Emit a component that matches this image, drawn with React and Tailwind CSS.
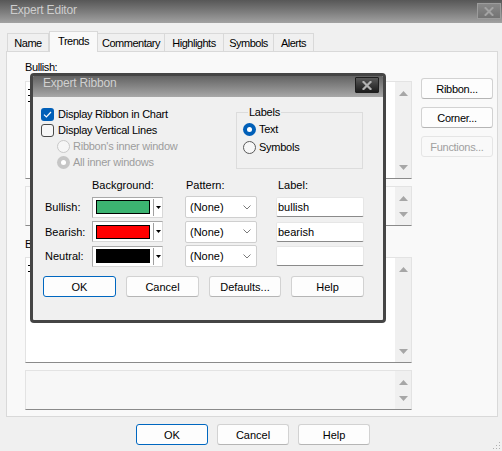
import React from "react";

const Up = () => (
  <svg width="9" height="5" viewBox="0 0 9 5"><path d="M4.5 0 L9 5 L0 5 Z" fill="#a6a6a6" /></svg>
);
const Down = () => (
  <svg width="9" height="5" viewBox="0 0 9 5"><path d="M0 0 L9 0 L4.5 5 Z" fill="#a6a6a6" /></svg>
);

function ListBox({ cls, marks = 0 }) {
  return (
    <div className={`flex border border-[#e3e3e3] border-b-[#8a8a8a] ${cls}`}>
      <div className="flex-1 flex flex-col gap-[5px] pt-[7px] pl-[2px]">
        {Array.from({ length: marks }).map((_, i) => (
          <div key={i} className="w-[3px] h-px bg-black" />
        ))}
      </div>
      <div className="w-[16px] bg-[#f0f0f0] flex flex-col items-center justify-between pt-[9px] pb-[8px]">
        <Up />
        <Down />
      </div>
    </div>
  );
}

function WinButton({ children, w = "w-[72px]", def = false, disabled = false }) {
  const border = def
    ? "border-[#0067c0]"
    : disabled
    ? "border-[#e5e5e5]"
    : "border-[#d2d2d2] border-b-[#b5b5b5]";
  const text = disabled ? "text-[#a0a0a0]" : "text-black";
  return (
    <div
      className={`${w} h-[21px] rounded-[3px] border ${border} ${disabled ? "bg-[#f9f9f9]" : "bg-[#fdfdfd]"} ${text} flex items-center justify-center`}
    >
      {children}
    </div>
  );
}

function CloseX({ color, sw }) {
  return (
    <svg width="10" height="9" viewBox="0 0 10 9">
      <path d="M1.5 1 L8.5 8 M8.5 1 L1.5 8" stroke={color} strokeWidth={sw} strokeLinecap="square" />
    </svg>
  );
}

function ColorCombo({ color }) {
  return (
    <div className="w-[71px] h-[21px] border border-[#a8a8a8] border-r-[#d8d8d8] border-b-[#d8d8d8] bg-white flex items-center">
      <div className={`ml-[3px] w-[54px] h-[14px] border border-black ${color}`} />
      <div className="ml-[3px] w-px h-[17px] bg-[#a0a0a0]" />
      <svg className="ml-[2px]" width="5" height="3" viewBox="0 0 5 3"><path d="M0 0 L5 0 L2.5 3 Z" fill="#000" /></svg>
    </div>
  );
}

function PatternCombo() {
  return (
    <div className="w-[72px] h-[22px] border border-[#cfcfcf] rounded-[2px] bg-white flex items-center justify-between pl-[4px] pr-[5px]">
      <span>(None)</span>
      <svg width="8" height="5" viewBox="0 0 8 5"><path d="M0.5 0.5 L4 4 L7.5 0.5" fill="none" stroke="#7a7a7a" strokeWidth="1" /></svg>
    </div>
  );
}

function LabelInput({ value }) {
  return (
    <div className="w-[88px] h-[20px] border border-[#e6e6e6] border-b-[#8a8a8a] rounded-[2px] bg-white flex items-center pl-[1px]">
      {value}
    </div>
  );
}

export default function App() {
  const tabs = [
    { t: "Name", w: "w-[42px]" },
    { t: "Trends", w: "w-[49px]", sel: true },
    { t: "Commentary", w: "w-[67px]" },
    { t: "Highlights", w: "w-[59px]" },
    { t: "Symbols", w: "w-[50px]" },
    { t: "Alerts", w: "w-[40px]" },
  ];
  return (
    <div className="w-[502px] h-[451px] bg-[#f0f0f0] relative overflow-hidden flex flex-col font-['Liberation_Sans',Arial,sans-serif] text-[11px] leading-[14px] text-black">
      {/* Title bar */}
      <div className="h-[23px] shrink-0 bg-linear-to-b from-[#575757] to-[#a2a2a2] flex justify-between items-start">
        <div className="pl-[10px] pt-[3px] text-[12px] leading-[14px] text-[#cdcdcd] tracking-[-0.2px]">Expert Editor</div>
        <div className="mt-[3px] mr-px w-[24px] h-[16px] border border-[#9c9c9c] bg-linear-to-b from-[#888888] to-[#737373] flex items-center justify-center">
          <CloseX color="#a3a3a3" sw="2" />
        </div>
      </div>

      {/* Tabs */}
      <div className="flex items-end h-[20px] mt-[8px] pl-[7px] tracking-[-0.5px]">
        {tabs.map((tab) =>
          tab.sel ? (
            <div
              key={tab.t}
              className={`${tab.w} h-[21px] -mb-px relative z-10 bg-[#f9f9f9] border border-b-0 border-[#d9d9d9] flex justify-center pt-[2px]`}
            >
              {tab.t}
            </div>
          ) : (
            <div
              key={tab.t}
              className={`${tab.w} h-[18px] bg-[#f0f0f0] border-t border-r border-[#d9d9d9] first:border-l flex justify-center pt-[2px]`}
            >
              {tab.t}
            </div>
          )
        )}
      </div>

      {/* Tab panel */}
      <div className="ml-[6px] w-[492px] h-[366px] border border-[#d9d9d9] bg-[#f9f9f9] flex pl-[18px] pr-[4px]">
        <div className="w-[387px] flex flex-col">
          <div className="mt-[8px] tracking-[-0.4px]">Bullish:</div>
          <ListBox cls="mt-[7px] h-[98px] bg-white" marks={3} />
          <ListBox cls="mt-[7px] h-[40px] bg-[#fbfbfb]" />
          <div className="mt-[11px] tracking-[-0.4px]">Bearish:</div>
          <ListBox cls="mt-[6px] h-[106px] bg-white" marks={2} />
          <ListBox cls="mt-[7px] h-[40px] bg-[#f7f7f7]" />
        </div>
        <div className="ml-[9px] w-[72px] flex flex-col gap-[8px] pt-[26px] tracking-[-0.3px]">
          <WinButton w="w-[72px]">Ribbon...</WinButton>
          <WinButton w="w-[72px]">Corner...</WinButton>
          <WinButton w="w-[72px]" disabled>Functions...</WinButton>
        </div>
      </div>

      {/* Bottom buttons */}
      <div className="mt-[7px] flex justify-center gap-[9px] pl-[4px]">
        <WinButton def>OK</WinButton>
        <WinButton>Cancel</WinButton>
        <WinButton>Help</WinButton>
      </div>

      {/* size grip */}
      <svg className="absolute right-[1px] bottom-[1px]" width="8" height="8" viewBox="0 0 8 8">
        <rect x="6" y="0" width="1" height="1" fill="#b0b0b0" />
        <rect x="3" y="3" width="1" height="1" fill="#b0b0b0" />
        <rect x="6" y="3" width="1" height="1" fill="#b0b0b0" />
        <rect x="0" y="6" width="1" height="1" fill="#b0b0b0" />
        <rect x="3" y="6" width="1" height="1" fill="#b0b0b0" />
        <rect x="6" y="6" width="1" height="1" fill="#b0b0b0" />
      </svg>

      {/* Modal dialog */}
      <div className="absolute left-[30px] top-[73px] w-[356px] h-[250px] border-[3px] border-[#454545] rounded-[4px] bg-[#f0f0f0] flex flex-col overflow-hidden z-20">
        <div className="h-[21px] shrink-0 bg-linear-to-b from-[#636363] to-[#a8a8a8] flex justify-between items-start">
          <div className="pl-[10px] text-[12px] leading-[14px] text-[#d0d0d0] tracking-[-0.2px]">Expert Ribbon</div>
          <div className="mt-px mr-[4px] w-[24px] h-[16px] border border-[#1e1e1e] rounded-[1px] bg-linear-to-b from-[#5a5a5a] to-[#1c1c1c] flex items-center justify-center">
            <CloseX color="#b4b4b4" sw="2.2" />
          </div>
        </div>

        {/* top section */}
        <div className="flex">
          <div className="w-[203px] pl-[8px] pt-[9px] flex flex-col tracking-[-0.25px]">
            <div className="h-[16px] flex items-center gap-[4px]">
              <div className="w-[13px] h-[13px] rounded-[3px] bg-[#005fb8] flex items-center justify-center">
                <svg width="9" height="7" viewBox="0 0 9 7"><path d="M1 3.6 L3.4 6 L8 1" fill="none" stroke="#fff" strokeWidth="1.2" /></svg>
              </div>
              <span>Display Ribbon in Chart</span>
            </div>
            <div className="h-[16px] flex items-center gap-[4px]">
              <div className="w-[13px] h-[13px] rounded-[3px] border border-[#4a4a4a] bg-[#f7f7f7]" />
              <span>Display Vertical Lines</span>
            </div>
            <div className="h-[16px] flex items-center gap-[3px] pl-[16px] text-[#9d9d9d]">
              <div className="w-[13px] h-[13px] rounded-full border border-[#c8c8c8] bg-[#f6f6f6]" />
              <span>Ribbon's inner window</span>
            </div>
            <div className="h-[16px] flex items-center gap-[3px] pl-[16px] text-[#9d9d9d]">
              <div className="w-[13px] h-[13px] rounded-full bg-[#c6c6c6] flex items-center justify-center">
                <div className="w-[5px] h-[5px] rounded-full bg-white" />
              </div>
              <span>All inner windows</span>
            </div>
          </div>
          <fieldset className="mt-[8px] w-[127px] h-[64px] border border-[#dcdcdc] pl-[6px] tracking-[-0.25px]">
            <legend className="ml-[5px] px-px leading-[14px]">Labels</legend>
            <div className="pt-[2px] h-[18px] flex items-center gap-[3px]">
              <div className="w-[13px] h-[13px] rounded-full bg-[#005fb8] flex items-center justify-center">
                <div className="w-[5px] h-[5px] rounded-full bg-white" />
              </div>
              <span>Text</span>
            </div>
            <div className="mt-[2px] h-[16px] flex items-center gap-[3px]">
              <div className="w-[13px] h-[13px] rounded-full border border-[#5a5a5a] bg-[#f7f7f7]" />
              <span>Symbols</span>
            </div>
          </fieldset>
        </div>

        {/* grid section */}
        <div className="mt-[8px] pl-[12px] flex flex-col">
          <div className="h-[14px] flex">
            <div className="w-[47px]" />
            <div className="w-[71px]">Background:</div>
            <div className="ml-[22px] w-[72px] pl-px">Pattern:</div>
            <div className="ml-[19px] pl-[2px]">Label:</div>
          </div>
          <div className="mt-[4px] flex flex-col gap-[2.5px]">
            {[
              { n: "Bullish:", c: "bg-[#3cb371]", l: "bullish" },
              { n: "Bearish:", c: "bg-[#ff0000]", l: "bearish" },
              { n: "Neutral:", c: "bg-black", l: "" },
            ].map((r) => (
              <div key={r.n} className="h-[22px] flex items-center">
                <div className="w-[47px]">{r.n}</div>
                <ColorCombo color={r.c} />
                <div className="ml-[22px]"><PatternCombo /></div>
                <div className="ml-[19px]"><LabelInput value={r.l} /></div>
              </div>
            ))}
          </div>
        </div>

        {/* buttons */}
        <div className="mt-[9px] pl-[10px] flex gap-[10px]">
          <WinButton w="w-[73px]" def>OK</WinButton>
          <WinButton w="w-[73px]">Cancel</WinButton>
          <WinButton w="w-[72px]">Defaults...</WinButton>
          <WinButton w="w-[73px]">Help</WinButton>
        </div>
      </div>
    </div>
  );
}
